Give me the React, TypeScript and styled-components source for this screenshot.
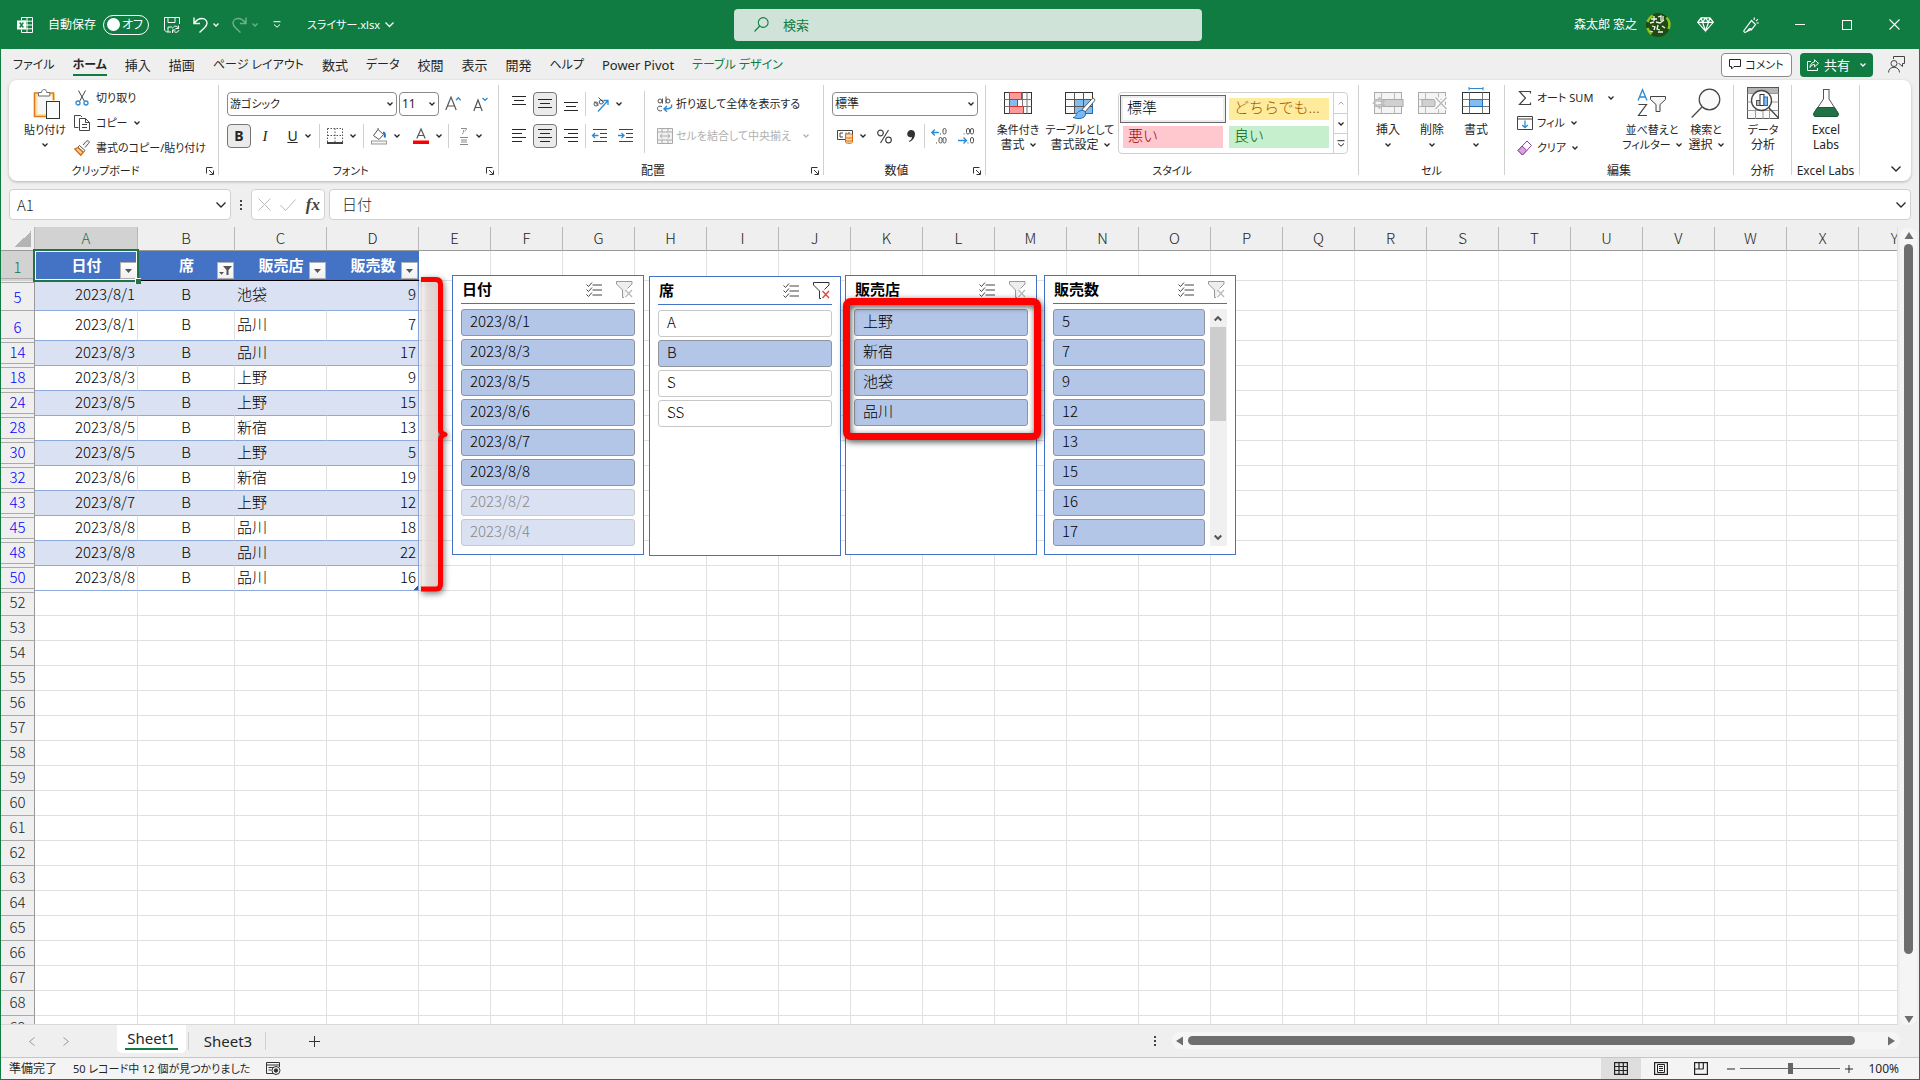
import React from "react";
import styled, { createGlobalStyle, css } from "styled-components";

const GREEN = "#107c41";
const INK = "#262626";
const LINE = "#d0d0d0";
const BLUE = "#4472c4";
const UI = `"Noto Sans", "Noto Sans CJK JP", sans-serif`;
const CELL = `"Noto Sans CJK JP", sans-serif`;

/* Labels that hold kana are set one step smaller than those in kanji or Latin. */
const hasKana = (text: string) => /[\u3041-\u30fc]/.test(text);

const Global = createGlobalStyle`
  *, *::before, *::after { box-sizing: border-box; }
  body { margin: 0; background: #efefef; }
  button, input, select { font: inherit; color: inherit; margin: 0; padding: 0; border: 0; background: none; outline: none; }
  button { display: inline-flex; align-items: center; justify-content: center; white-space: nowrap; }
  svg { display: block; flex: none; overflow: visible; }
`;

const Window = styled.div`
  height: 100vh;
  display: flex;
  flex-direction: column;
  border: 1px solid ${GREEN};
  border-top: 0;
  background: #efefef;
  color: ${INK};
  font: 12px/16px ${UI};
  font-feature-settings: "palt";
`;

/* ---------- icons ---------- */
type IconProps = { w?: number; h?: number; stroke?: string; sw?: number; children?: React.ReactNode };
const Icon = ({ w = 16, h = 16, stroke = "currentColor", sw = 1, children }: IconProps) => (
  <svg width={w} height={h} viewBox={`0 0 ${w} ${h}`} fill="none" stroke={stroke} strokeWidth={sw} aria-hidden="true">
    {children}
  </svg>
);
const Chevron = ({ size = 6, color = "currentColor", sw = 1.3 }: { size?: number; color?: string; sw?: number }) => (
  <svg width={size} height={size / 2 + 1} viewBox={`0 0 ${size} ${size / 2 + 1}`} fill="none" stroke={color} strokeWidth={sw} aria-hidden="true">
    <path d={`M.5 .5 L${size / 2} ${size / 2} L${size - 0.5} .5`} />
  </svg>
);

const ExcelLogo = () => (
  <Icon>
    <path d="M4.500 3.500v-3h11v15h-11v-3M10 .5v15M4.500 4.200h11M8 8h7.500M8 11.800h7.500" />
    <rect x="0" y="3.500" width="9" height="9" fill="currentColor" stroke="none" />
    <path d="M2.700 5.500l3.600 5M6.300 5.500l-3.600 5" stroke={GREEN} strokeWidth="1.4" />
  </Icon>
);
const SaveIcon = () => (
  <Icon>
    <path d="M7 15H2.500L.5 13V.5h15V7M4 .5v5h7v-5M4 15v-5h4M14.500 8.500v3h-3M8.500 11.500c1-3 4.500-3 6-.3M8.500 16v-3h3M15 13c-1 3-4.500 3-6 .3" />
  </Icon>
);
const UndoIcon = ({ flip = false }: { flip?: boolean }) => (
  <Icon w={15} h={16} sw={1.4}>
    <g transform={flip ? "translate(15 0) scale(-1 1)" : undefined}>
      <path d="M1 .5v6h6M1.300 6.200C3.500 3 6 1.500 9 1.500c3 0 5 2.200 5 4.800 0 2-1 3-2.500 4.500L6.500 15.500" />
    </g>
  </Icon>
);
const CustomizeIcon = () => (
  <Icon w={8} h={7}>
    <path d="M.5 .7h7M1 3.500l3 2.700 3-2.700" />
  </Icon>
);
const SearchIcon = () => (
  <Icon w={15} h={15} sw={1.1}>
    <circle cx="9.200" cy="5.500" r="4.900" />
    <path d="M5.700 9L.5 14.500" />
  </Icon>
);
const AvatarIcon = () => (
  <Icon w={24} h={24}>
    <circle cx="12" cy="12" r="12" fill="#1f4a14" stroke="none" />
    <path d="M1.500 9a11 11 0 0 1 5.500-6.500M1.500 15a11 11 0 0 0 4 6M20.500 4.500a11 11 0 0 1 2 11.500" stroke="#8fc31f" strokeWidth="2.500" />
    <path d="M5 6h6M8 3v5M4 10l4-1M12 4l3-1v5M10 9l4 1 4-3M17 3v5M6 13l3 1-1 3M12 12l-1 4 3 1M12 19h5M16 13l3 2M4 18l3 1" stroke="#f2f7e8" strokeWidth="1.300" />
  </Icon>
);
const GemIcon = () => (
  <Icon w={17} h={15} sw={1.2}>
    <path d="M4 .8h9l3.300 4.500L8.500 14.200.7 5.300zM.7 5.300h15.600M4 .8l1.500 4.500 3 8.700 3-8.700L13 .8M8.500.8l-3 4.500M8.500.8l3 4.500" />
  </Icon>
);
const PenIcon = () => (
  <Icon w={16} h={16} sw={1.2}>
    <path d="M8.500 3.500l4 4L9 12 2.500 15.200c-1 .3-2-.5-1.500-1.700zM4 14.500L6 12c1-1 3 0 2.500 1.500M11 2.800L11.500.5M13 4.200l2-2M13.500 6h2.300" />
  </Icon>
);
const CloseIcon = () => (
  <Icon w={11} h={11} sw={1.1}>
    <path d="M.5.5l10 10M10.500.5l-10 10" />
  </Icon>
);
const PasteIcon = () => (
  <Icon w={28} h={32}>
    <g transform="translate(2 1)">
      <path d="M2 6h20v10H14v13H2z" fill="#fbe0a2" stroke="none" />
      <rect x="4.500" y="7" width="15" height="19" fill="#f7f7f7" stroke="none" />
      <path d="M5.500 5H1.500v23.500H13M16.500 5h4v7" stroke="#e07a1a" strokeWidth="1.600" />
      <path d="M5.500 8V4.500h3c.3-4 5-4 5.300 0h3V8z" fill="#fff" stroke="#6b6b6b" />
      <rect x="13.500" y="13.500" width="13" height="17" fill="#fafafa" stroke="#333" />
    </g>
  </Icon>
);
const CutIcon = () => (
  <Icon>
    <path d="M4.500.5l6 11M11.500.5l-6 11" stroke="#444" />
    <circle cx="4" cy="13" r="2" stroke="#2a8ad4" strokeWidth="1.300" />
    <circle cx="12" cy="13" r="2" stroke="#2a8ad4" strokeWidth="1.300" />
  </Icon>
);
const CopyIcon = () => (
  <Icon w={17} h={16} stroke="#444">
    <path d="M4.500 12.500H.5V.5h6L8 2M5.500 3.500h6l4 4v8h-10zM11.500 3.500v4h4M8 9.500h5M8 12.500h5" />
  </Icon>
);
const BrushIcon = () => (
  <Icon>
    <path d="M9 5l3-3.500c1-1 2.500-1 3 0s0 1.500-.500 2L11 7.500" stroke="#555" fill="#eee" />
    <path d="M5.500 5.500l5.500 5-1.500 1.700-5.500-5z" stroke="#555" fill="#fff" />
    <path d="M4 7.500L.8 9l6 6.200 2.500-3z" stroke="#d8690e" fill="#f8cf86" strokeWidth="1.300" />
  </Icon>
);
const GrowFontIcon = ({ down = false }: { down?: boolean }) => (
  <Icon w={16} h={16}>
    <path d={down ? "M.8 15L5 4l4.200 11M2.500 11.500h5" : "M.8 14L6 1l5.200 13M2.800 10h6.400"} stroke="#555" strokeWidth="1.200" />
    <path d={down ? "M9.500 2l2.500 2.300L14.500 2" : "M11 4.200l2.300-2.500 2.300 2.500"} stroke="#2a8ad4" strokeWidth="1.300" />
  </Icon>
);
const BordersIcon = () => (
  <Icon stroke="#555">
    <path d="M.5.500h15v14M.5.5v14M8 .5v14M.5 7.500h15" strokeDasharray="1.500 1.500" />
    <path d="M0 15h16" stroke="#111" strokeWidth="1.600" />
  </Icon>
);
const FillIcon = () => (
  <Icon>
    <path d="M7 1.500L2.500 7.500 8 11.500l4.500-5zM7 1.500V0" stroke="#555" />
    <path d="M12 4.500c2 0 2 2 1.800 5" stroke="#2a6fb8" strokeWidth="2" />
    <rect x=".5" y="13" width="15" height="3" fill="#f4f4f4" stroke="#999" />
  </Icon>
);
const FontColorIcon = () => (
  <Icon>
    <path d="M3.800 10.500L8 1l4.200 9.500M5.500 7.500h5" stroke="#555" strokeWidth="1.200" />
    <rect x="0" y="12.500" width="16" height="3.500" fill="#f00" stroke="none" />
  </Icon>
);
const RubyIcon = () => (
  <Icon w={10} h={18} stroke="#888">
    <path d="M2 1.500h5.500c0 1.200-.7 2-1.700 2.600M4.700 3c0 2-.4 3-1.700 4M1 10.500h8M2 13h6M2 15h6M1 17.500h8" />
  </Icon>
);
const AlignIcon = ({ rows }: { rows: [number, number, number][] }) => (
  <Icon stroke={INK}>
    {rows.map(([x, y, w]) => (
      <path key={y} d={`M${x} ${y + 0.5}h${w}`} />
    ))}
  </Icon>
);
const OrientIcon = () => (
  <Icon>
    <g stroke="#555">
      <circle cx="3" cy="8" r="2" />
      <path d="M5 9.500L1.500 5.500M5.500 1.500l5 5" />
      <circle cx="8.200" cy="6" r="2" />
    </g>
    <path d="M5 15.500L15 4.500M10.500 4.500H15V9" stroke="#2a8ad4" strokeWidth="1.300" />
  </Icon>
);
const WrapIcon = () => (
  <Icon>
    <g stroke="#555">
      <circle cx="3" cy="5" r="2" />
      <path d="M5.500 2.500v5M9 .5v7M5 10.500c-3-1-4.500 0-4.500 2s2 3 4.500 2" />
      <circle cx="11" cy="5" r="2" />
    </g>
    <path d="M14.500 8.500c1 3-1 4.500-7 4.500M10 10l-3 3 3 2.700" stroke="#2a8ad4" strokeWidth="1.400" />
  </Icon>
);
const MergeIcon = () => (
  <Icon stroke="#aaa">
    <path d="M.5.5h15v15H.5z" fill="#f2f2f2" />
    <path d="M.5 4h15M.5 12h15M5 .5V4M11 .5V4M5 12v3.500M11 12v3.500M3 8h10M5.500 5.800L3 8l2.500 2.200M10.500 5.800L13 8l-2.500 2.200" />
  </Icon>
);
const IndentIcon = ({ right = false }: { right?: boolean }) => (
  <Icon stroke="#444">
    <path d="M1 1.500h14M8 5.500h7M8 9.500h7M1 13.500h14" />
    <path d={right ? "M0 7.500h6M3.500 5L6 7.500 3.500 10" : "M.5 7.500h6M3 5L.5 7.500 3 10"} stroke="#2a8ad4" strokeWidth="1.300" />
  </Icon>
);
const MoneyIcon = () => (
  <Icon>
    <path d="M.5 2.500h15v9H.5z" stroke="#444" />
    <path d="M6 5H3v4h3M9 4.500v5M13 5h-2v3" stroke="#444" />
    <path d="M8.500 7v7c0 1.800 7 1.800 7 0V7c0-1.600-7-1.600-7 0z" fill="#fbd9b0" stroke="#d8690e" />
    <path d="M8.500 9c0 1.500 7 1.500 7 0M8.500 12c0 1.500 7 1.500 7 0" stroke="#d8690e" />
  </Icon>
);
const PercentIcon = () => (
  <Icon w={15} h={15} stroke="#444" sw={1.2}>
    <circle cx="3.500" cy="4" r="2.800" />
    <circle cx="11.500" cy="11" r="2.800" />
    <path d="M11.500 1L3.500 14" />
  </Icon>
);
const CommaIcon = () => (
  <Icon w={8} h={12}>
    <path d="M4 0c2.500 0 4 1.500 4 4 0 3.500-2 6.500-5.500 8l-.500-1C4 10 5 8.500 5 7 2 8 .2 6.300.2 4 .2 1.700 2 0 4 0z" fill="#333" stroke="none" />
  </Icon>
);
const DecimalIcon = ({ less = false }: { less?: boolean }) => {
  const zero = (x: number, y: number) => <rect key={`${x}-${y}`} x={x} y={y} width="3" height="5.500" rx="1.500" />;
  return (
    <Icon stroke="#555">
      {less ? [zero(8.5, 0.5), zero(12.5, 0.5), zero(12.5, 9.5)] : [zero(12, 0.5), zero(8, 9.5), zero(12, 9.5)]}
      {less ? <path d="M6 5.500v1M10 14.500v1" /> : <path d="M9.500 5.500v1M5.500 14.500v1" />}
      <path d={less ? "M0 12.500h8.500M5.500 9.500l3 3-3 3" : "M.8 4.500h7M3.800 1.500l-3 3 3 3"} stroke="#2a8ad4" strokeWidth="1.300" />
    </Icon>
  );
};
const CondIcon = () => (
  <Icon w={28} h={22}>
    <rect x=".5" y=".5" width="27" height="21" fill="#fafafa" stroke="#333" />
    <path d="M.5 7.500h27M.5 14.500h27M5.500.5v21M18.500.5v21M23 .5v21" stroke="#777" />
    <rect x="5.500" y=".5" width="12" height="7" fill="#ff9a9a" stroke="#d5332f" />
    <rect x="5.500" y="7.500" width="8" height="7" fill="#83bdf0" stroke="#1e6fb8" />
    <rect x="5.500" y="14.500" width="14" height="7" fill="#ff9a9a" stroke="#d5332f" />
  </Icon>
);
const TableFormatIcon = () => (
  <Icon w={30} h={28}>
    <g transform="translate(0 3)">
      <rect x=".5" y=".5" width="27" height="21" fill="#fafafa" stroke="#333" />
      <rect x="9.500" y="7.500" width="18" height="14" fill="#83bdf0" stroke="#1e6fb8" />
      <path d="M.5 7.500h27M.5 14.500h27M9.500.5v21M18.500.5v21" stroke="#555" />
      <path d="M29 6.500c1 1 1 2 0 3L20 20l-3-2.500L26.500 7.500c1-1 2-1.500 2.500-1z" fill="#fff" stroke="#555" />
      <path d="M18 18.500c3 .5 3.500 4 1 6.500-2.500 2-7 2-11 .5 3.500-.5 2.500-2.500 4.500-5 1.500-1.700 3.500-2.200 5.500-2z" fill="#7db8ee" stroke="#1e6fb8" />
    </g>
  </Icon>
);
const CellIcon = ({ kind }: { kind: "insert" | "delete" | "format" }) => {
  const live = kind === "format";
  const line = live ? "#333" : "#aaa";
  return (
    <Icon w={30} h={32}>
      <rect x="1.500" y="5.500" width="27" height="21" fill={live ? "#fff" : "#f4f4f4"} stroke={line} />
      <path d="M1.500 12.500h27M1.500 19.500h27M8.500 5.500v21M21.500 5.500v21" stroke={live ? "#777" : "#bbb"} />
      {kind === "format" && (
        <>
          <rect x="8.500" y="12.500" width="13" height="7" fill="#83bdf0" stroke="#1e6fb8" />
          <path d="M8 1.500h14M8 0v3.500M22 0v3.500" stroke="#2a8ad4" />
        </>
      )}
      {kind === "insert" && (
        <>
          <rect x="10" y="12.500" width="20" height="7" fill="#d0d0d0" stroke="#aaa" />
          <path d="M12 14.300H5M12 17.700H5M7.500 10.500L.5 16l7 5.500" stroke="#bbb" strokeWidth="1.600" />
        </>
      )}
      {kind === "delete" && (
        <>
          <rect x="5" y="12.500" width="13" height="7" fill="#d0d0d0" stroke="#aaa" />
          <path d="M18.500 10.500l11 11.500M29.500 10.500l-11 11.500" stroke="#fff" strokeWidth="4" />
          <path d="M18.500 10.500l11 11.500M29.500 10.500l-11 11.500" stroke="#bbb" strokeWidth="1.600" />
        </>
      )}
    </Icon>
  );
};
const SumIcon = () => (
  <Icon stroke="#444" sw={1.2}>
    <path d="M13.500 3.500V1.500h-11L8.500 8l-6 6.500h11v-2" />
  </Icon>
);
const FillDownIcon = () => (
  <Icon>
    <path d="M.5 1.500h15v13H.5zM.5 4h15" stroke="#444" />
    <path d="M8 5.500v7M5.200 10L8 12.700 10.800 10" stroke="#2a8ad4" strokeWidth="1.300" />
  </Icon>
);
const EraserIcon = () => (
  <Icon>
    <path d="M10 1l4.500 4.500-9 9.500L1 10.500z" fill="#fff" stroke="#8c3f99" />
    <path d="M5.200 6L9.700 10.500 5.500 15 1 10.500z" fill="#dba2e3" stroke="#8c3f99" />
  </Icon>
);
const SortIcon = () => (
  <Icon w={30} h={28}>
    <path d="M1 11.500L5.500.8 10 11.500M2.800 8h5.400" stroke="#2a8ad4" strokeWidth="1.300" />
    <path d="M1.500 15.500h8L1.500 26.500h8.500" stroke="#444" strokeWidth="1.200" />
    <path d="M13.500 7.500h15v3l-5.500 5v7h-4v-7l-5.500-5z" fill="#f6f6f6" stroke="#444" />
  </Icon>
);
const FindIcon = () => (
  <Icon w={30} h={30} stroke="#444" sw={1.2}>
    <circle cx="18.500" cy="11.500" r="10.300" fill="#fafafa" />
    <path d="M11 19L.7 29.500" />
  </Icon>
);
const AnalyzeIcon = () => (
  <Icon w={32} h={32}>
    <rect x=".5" y=".5" width="31" height="31" fill="#fafafa" stroke="#555" />
    <rect x="1" y="1" width="30" height="5" fill="#b5b5b5" stroke="none" />
    <path d="M.5 6.500h31M.5 15h31M.5 23.500h31M8.500 6v26M22.500 6v26M16 22v10" stroke="#999" />
    <circle cx="14.500" cy="13.500" r="10" fill="#fff" stroke="#444" strokeWidth="1.300" />
    <path d="M22 21l9.500 10" stroke="#444" strokeWidth="1.300" />
    <rect x="9.500" y="13.500" width="4" height="5" fill="#bbb" stroke="#555" />
    <rect x="13" y="7.500" width="4" height="11" fill="#fff" stroke="#333" />
    <rect x="17" y="10" width="3.500" height="8.500" fill="#83bdf0" stroke="#1e6fb8" />
  </Icon>
);
const FlaskIcon = () => (
  <Icon w={26} h={30}>
    <path d="M10 1.500h6.500M10.500 1.500V11L1 25c-1 2 0 3.500 2 3.500h20c2 0 3-1.500 2-3.500L16 11V1.500" fill="#fff" stroke="#555" />
    <path d="M4.500 19.500h17L25 25c1 2 0 3.500-2 3.500H3C1 28.500 0 27 1 25z" fill="#217346" stroke="#1a5c38" />
  </Icon>
);
const LauncherIcon = () => (
  <Icon w={8} h={8} stroke="#333">
    <path d="M.5 6.500v-6h6M3 3l4 4M7.500 3.500v4h-4" />
  </Icon>
);
const CommentIcon = () => (
  <Icon w={12} h={11}>
    <path d="M.5.5h11v7H5L2.500 10V7.500h-2z" />
  </Icon>
);
const ShareIcon = () => (
  <Icon w={12} h={12}>
    <path d="M4 2.500H.5v9h10V9M7.500 3V.8l4 3.500-4 3.500V5.500C5.500 5.500 4 6.500 3 8.500 3 5.500 5 3.300 7.500 3z" />
  </Icon>
);
const FeedbackIcon = () => (
  <Icon w={17} h={17} stroke="#444">
    <circle cx="6" cy="7.500" r="3" />
    <path d="M.5 16.500c0-7 11-7 11 0M5.500 3V.5h11v7h-2v3L11 7.500h-.5" />
  </Icon>
);
const CancelIcon = () => (
  <Icon w={13} h={13} stroke="#bbb">
    <path d="M.5.5l12 12M12.500.5l-12 12" />
  </Icon>
);
const CheckIcon = () => (
  <Icon w={16} h={12} stroke="#bbb">
    <path d="M.5 6l5 5.500L15.500.5" />
  </Icon>
);
const MultiIcon = () => (
  <Icon w={16} h={15} stroke="#444">
    <path d="M6.500 3h9.500M6.500 8h9.500M6.500 13h9.500M.5 2.500L2.500 4.500 6 .5M.5 7.500l2 2L6 5.500M.5 12.500l2 2L6 10.500" />
  </Icon>
);
const ClearIcon = ({ active }: { active: boolean }) => (
  <Icon w={17} h={17} stroke={active ? "#333" : "#999"}>
    <path d="M8 16.500H6.500V9L.5 3V.5h15.500V3L11.500 7.500" fill={active ? "#fff" : "#eee"} />
    <path d="M9.500 9l6.500 7M16 9l-6.500 7" stroke={active ? "#e8413c" : "#bbb"} strokeWidth="1.300" />
  </Icon>
);
const MacroIcon = () => (
  <Icon w={15} h={13} stroke="#333">
    <path d="M7 11.500H.5v-11h13V5M.5 3h13M2.500 5.500h5M2.500 8h3" />
    <circle cx="10" cy="8.500" r="4" />
    <circle cx="10" cy="8.500" r="1.700" fill="#333" />
  </Icon>
);
const ViewIcon = ({ kind }: { kind: "grid" | "page" | "break" }) => (
  <Icon w={14} h={13} stroke="#222" sw={1.2}>
    <rect x=".6" y=".6" width="12.800" height="11.800" />
    {kind === "grid" && <path d="M.5 4.500h13M.5 8.500h13M5 .5v12M9.300.5v12" />}
    {kind === "page" && <path d="M3.500 2.500h7v8h-7zM5 4.500h4M5 6.500h4M5 8.500h4" strokeWidth="1" />}
    {kind === "break" && <path d="M5 .5v6.500M9.300 .5v6.500M.5 7h9" />}
  </Icon>
);
const Triangle = ({ dir }: { dir: "up" | "down" | "left" | "right" }) => {
  const d = { up: "M4 0l4.500 7h-9z", down: "M-.5 0h9L4 7z", left: "M7 -.5v9L0 4z", right: "M0 -.5l7 4.500-7 4.500z" }[dir];
  return (
    <Icon w={8} h={8}>
      <path d={d} fill="#6e6e6e" stroke="none" />
    </Icon>
  );
};

/* ---------- title bar ---------- */
const TitleBar = styled.header`
  flex: none;
  height: 49px;
  margin: 0 -1px;
  display: grid;
  grid-template-columns: 734fr 468fr 718fr;
  align-items: center;
  background: ${GREEN};
  color: #fff;
`;
const TitleLeft = styled.div`
  display: flex;
  align-items: center;
  padding-left: 17px;
  gap: 15px;
`;
const TitleRight = styled.div`
  display: flex;
  align-items: center;
  justify-content: flex-end;
  padding-right: 20px;
`;
const Account = styled.button`
  gap: 9px;
  margin-right: 27px;
`;
const TitleTools = styled.div`
  display: flex;
  align-items: center;
  gap: 29px;
  margin-right: 36px;
`;
const WindowTools = styled.div`
  display: flex;
  align-items: center;
  gap: 37px;
`;
const MinBar = styled.span`
  width: 10px;
  height: 1px;
  background: #fff;
`;
const MaxBox = styled.span`
  width: 10px;
  height: 10px;
  border: 1px solid #fff;
`;
const AutoSave = styled.label`
  display: flex;
  align-items: center;
  gap: 7px;
`;
const Toggle = styled.button`
  width: 46px;
  height: 20px;
  justify-content: space-between;
  padding: 0 5px 0 3px;
  border: 1px solid #fff;
  border-radius: 10px;
  &::before {
    content: "";
    width: 13px;
    height: 13px;
    border-radius: 50%;
    background: #fff;
  }
`;
const Split = styled.button<{ $dim?: boolean }>`
  gap: 5px;
  margin-left: -2px;
  opacity: ${(p) => (p.$dim ? 0.4 : 1)};
`;
const FileName = styled.button`
  gap: 5px;
  margin-left: 11px;
  font-size: 11px;
`;
const SearchBox = styled.label`
  display: flex;
  align-items: center;
  gap: 14px;
  height: 32px;
  padding-left: 20px;
  border-radius: 4px;
  background: #cfe3d8;
  color: ${GREEN};
  font-size: 13px;
  input {
    flex: 1;
    &::placeholder { color: ${GREEN}; opacity: 1; }
  }
`;

/* ---------- tabs ---------- */
const TabBar = styled.nav`
  flex: none;
  height: 31px;
  display: flex;
  align-items: center;
  padding: 0 14px 0 12px;
  gap: 18px;
`;
const Tab = styled.button<{ $active?: boolean; $accent?: boolean; $kana: boolean }>`
  height: 22px;
  padding-top: 2px;
  border-bottom: 2px solid ${(p) => (p.$active ? GREEN : "transparent")};
  font-size: ${(p) => (p.$kana ? 12 : 13)}px;
  font-weight: ${(p) => (p.$active ? 700 : 400)};
  color: ${(p) => (p.$accent ? GREEN : INK)};
`;
const TabActions = styled.div`
  margin-left: auto;
  display: flex;
  align-items: center;
  gap: 8px;
`;
const CommentButton = styled.button`
  height: 24px;
  width: 71px;
  gap: 4px;
  border: 1px solid #8a8a8a;
  border-radius: 4px;
  background: #fff;
  font-size: 11px;
`;
const ShareButton = styled.button`
  height: 24px;
  width: 73px;
  gap: 5px;
  margin-right: 7px;
  border-radius: 4px;
  background: ${GREEN};
  color: #fff;
  font-size: 13px;
  svg:last-child { margin-left: 5px; }
`;

/* ---------- ribbon ---------- */
const Ribbon = styled.section`
  flex: none;
  height: 101px;
  margin: 0 8px;
  padding: 5px 0;
  display: flex;
  background: #fff;
  border-radius: 8px;
  box-shadow: 0 1px 3px rgba(0, 0, 0, 0.25);
`;
const GroupBox = styled.div<{ $w: number }>`
  width: ${(p) => p.$w}px;
  height: 90px;
  display: flex;
  flex-direction: column;
  border-right: 1px solid ${LINE};
`;
const GroupBody = styled.div<{ $pad: number }>`
  flex: 1;
  display: flex;
  padding-left: ${(p) => p.$pad}px;
`;
const GroupFoot = styled.div`
  height: 9px;
  display: flex;
  align-items: center;
  line-height: 9px;
  white-space: nowrap;
`;
const GroupName = styled.span<{ $kana: boolean }>`
  flex: 1;
  display: flex;
  justify-content: center;
  font-size: ${(p) => (p.$kana ? 11 : 12)}px;
`;
const Launcher = styled.button`
  width: 16px;
`;
const Group = ({ w, name, pad, launcher, children }: { w: number; name: string; pad: number; launcher?: boolean; children: React.ReactNode }) => (
  <GroupBox $w={w} role="group" aria-label={name}>
    <GroupBody $pad={pad}>{children}</GroupBody>
    <GroupFoot>
      <GroupName $kana={hasKana(name)}>{name}</GroupName>
      {launcher && (
        <Launcher aria-label={`${name}の設定`}>
          <LauncherIcon />
        </Launcher>
      )}
    </GroupFoot>
  </GroupBox>
);
const BigButton = styled.button<{ $w: number }>`
  width: ${(p) => p.$w}px;
  flex-direction: column;
  justify-content: flex-start;
  align-self: flex-start;
  padding-top: 2px;
  line-height: 15px;
`;
const BigIcon = styled.span`
  height: 32px;
  margin-bottom: 3px;
  display: flex;
  align-items: center;
  justify-content: center;
`;
const BigLine = styled.span<{ $kana: boolean }>`
  height: 15px;
  display: flex;
  align-items: center;
  gap: 5px;
  font-size: ${(p) => (p.$kana ? 11 : 12)}px;
`;
const Big = ({ w, icon, lines, arrow }: { w: number; icon: React.ReactNode; lines: string[]; arrow?: boolean }) => (
  <BigButton $w={w}>
    <BigIcon>{icon}</BigIcon>
    {lines.map((t, i) => (
      <BigLine key={i} $kana={hasKana(t)}>
        {t}
        {arrow && i === lines.length - 1 && <Chevron />}
      </BigLine>
    ))}
  </BigButton>
);
const Stack = styled.div`
  display: flex;
  flex-direction: column;
  align-items: flex-start;
`;
const Small = styled.button<{ $w?: number }>`
  height: 25px;
  gap: 4px;
  width: ${(p) => (p.$w ? `${p.$w}px` : "auto")};
  justify-content: flex-start;
  font-size: 11px;
  > svg:last-child:not(:first-child) { margin-left: 2px; }
`;
const IconPad = styled.span`
  width: 20px;
  display: flex;
  justify-content: center;
`;
const Gap = styled.span<{ $w: number }>`
  width: ${(p) => p.$w}px;
`;
const Spread = styled.span`
  margin-right: auto;
`;
const TwoRows = styled.div`
  padding-top: 7px;
  display: flex;
  flex-direction: column;
  gap: 8px;
`;
const ToolRow = styled.div<{ $gap?: number }>`
  height: 24px;
  display: flex;
  align-items: center;
  gap: ${(p) => p.$gap || 0}px;
`;
const Tool = styled.button<{ $w?: number; $on?: boolean }>`
  width: ${(p) => p.$w || 24}px;
  height: 24px;
  gap: 7px;
  font-size: 14px;
  ${(p) =>
    p.$on &&
    css`
      border: 1px solid #767676;
      border-radius: 4px;
      background: #ebebeb;
    `}
`;
const Italic = styled.i`
  font-family: "Liberation Serif", serif;
  font-size: 15px;
`;
const Rule = styled.i<{ $h?: number; $m?: number }>`
  flex: none;
  width: 1px;
  height: ${(p) => p.$h || 24}px;
  margin: 0 ${(p) => p.$m || 0}px;
  background: ${LINE};
`;
const RuleSlot = styled.div`
  padding: 6px 12px 0 0;
  margin-left: auto;
`;
const RuleBar = styled.div`
  display: flex;
  align-items: center;
`;
const SelectBox = styled.label<{ $w: number; $kana: boolean }>`
  width: ${(p) => p.$w}px;
  height: 24px;
  display: grid;
  align-items: center;
  border: 1px solid #8a8a8a;
  border-radius: 4px;
  background: #fff;
  font-size: ${(p) => (p.$kana ? 11 : 12)}px;
  select {
    grid-area: 1 / 1;
    appearance: none;
    width: 100%;
    height: 22px;
    padding-left: 2px;
  }
  svg {
    grid-area: 1 / 1;
    justify-self: end;
    margin-right: 3px;
    pointer-events: none;
  }
`;
const Select = ({ w, label, value }: { w: number; label: string; value: string }) => (
  <SelectBox $w={w} $kana={hasKana(value)}>
    <select aria-label={label} defaultValue={value}>
      <option>{value}</option>
    </select>
    <Chevron />
  </SelectBox>
);
const WideTool = styled.button<{ $dim?: boolean }>`
  width: 152px;
  height: 24px;
  gap: 3px;
  justify-content: flex-start;
  font-size: 11px;
  color: ${(p) => (p.$dim ? "#b0b0b0" : INK)};
`;
const Gallery = styled.div`
  width: 230px;
  height: 62px;
  margin-top: 7px;
  display: flex;
  border: 1px solid ${LINE};
  border-radius: 4px;
`;
const GalleryGrid = styled.div`
  flex: 1;
  display: grid;
  grid-template-columns: 106px 106px;
  grid-template-rows: 28px 28px;
  padding: 2px 1px;
`;
const Swatch = styled.button<{ $bg: string; $fg: string; $on?: boolean }>`
  justify-content: flex-start;
  align-items: flex-start;
  margin: ${(p) => (p.$on ? "0" : "3px")};
  padding: ${(p) => (p.$on ? "2px 6px" : "0 5px")};
  border: ${(p) => (p.$on ? "1px solid #666" : "0")};
  box-shadow: ${(p) => (p.$on ? "inset 0 0 0 2px #ececec" : "none")};
  background: ${(p) => p.$bg};
  color: ${(p) => p.$fg};
  font: 300 15px/17px ${CELL};
  font-feature-settings: normal;
`;
const GalleryScroll = styled.div`
  width: 15px;
  display: grid;
  grid-template-rows: repeat(3, 1fr);
  border-left: 1px solid ${LINE};
  button + button { border-top: 1px solid ${LINE}; }
`;
const Collapse = styled.button`
  margin: auto 10px 4px auto;
`;

/* ---------- formula bar ---------- */
const FormulaBar = styled.div`
  flex: none;
  height: 46px;
  padding: 8px 8px 7px;
  display: flex;
`;
const Field = styled.label<{ $w?: number }>`
  ${(p) => (p.$w ? `width: ${p.$w}px;` : "flex: 1;")}
  display: flex;
  align-items: center;
  padding: 0 4px 0 7px;
  border: 1px solid ${LINE};
  border-radius: 4px;
  background: #fff;
  font: 300 15px/20px ${CELL};
  font-feature-settings: normal;
  input {
    flex: 1;
    min-width: 0;
    height: 28px;
    padding-bottom: ${(p) => (p.$w ? 0 : 2)}px;
  }
`;
const Dots = styled.span<{ $w: number }>`
  width: ${(p) => p.$w}px;
  display: flex;
  flex-direction: column;
  align-items: center;
  justify-content: center;
  gap: 2px;
  i { width: 2px; height: 2px; background: #444; }
`;
const FxBox = styled.div`
  width: 74px;
  margin-right: 4px;
  display: flex;
  align-items: center;
  justify-content: space-between;
  padding: 0 4px 0 6px;
  border: 1px solid ${LINE};
  border-radius: 4px;
  background: #fff;
`;
const Fx = styled.button`
  font: italic 700 17px/20px "Liberation Serif", serif;
  color: #444;
`;

/* ---------- sheet ---------- */
const Main = styled.main`
  flex: 1;
  min-height: 0;
  display: flex;
`;
const Sheet = styled.div`
  position: relative;
  flex: 1;
  min-width: 0;
  overflow: hidden;
  border-right: 1px solid #e0e0e0;
  border-bottom: 1px solid #d8d8d8;
`;
const Grid = styled.table`
  table-layout: fixed;
  width: 1931px;
  border-collapse: separate;
  border-spacing: 0;
  font: 300 15px/22px ${CELL};
  font-feature-settings: normal;
  color: #000;
`;
const ColHead = styled.th<{ $on?: boolean }>`
  height: 24px;
  padding: 0 0 1px;
  border-right: 1px solid #b8b8b8;
  border-bottom: 1px solid #999;
  background: ${(p) => (p.$on ? "#d2d2d2" : "#efefef")};
  color: ${(p) => (p.$on ? "#217346" : "#222")};
  font-weight: 300;
`;
const Corner = styled.th`
  padding: 0;
  border-right: 1px solid #b8b8b8;
  border-bottom: 1px solid #999;
  background: linear-gradient(135deg, transparent 50%, #b4b4b4 50%) 14px 4px / 16px 16px no-repeat #efefef;
`;
const RowHead = styled.th<{ $before?: boolean; $after?: boolean; $kind: "sel" | "filtered" | "plain" }>`
  padding: 0 0 ${(p) => (p.$after ? 3 : 2)}px;
  vertical-align: bottom;
  border-right: 1px solid #999;
  border-bottom: ${(p) => (p.$after ? "0" : "1px solid #aaa")};
  background-color: ${(p) => (p.$kind === "sel" ? "#d2d2d2" : "#efefef")};
  background-image: linear-gradient(#aaa, #aaa), linear-gradient(#aaa, #aaa);
  background-repeat: no-repeat;
  background-size: 100% ${(p) => (p.$before ? 1 : 0)}px, 100% ${(p) => (p.$after ? 1 : 0)}px;
  background-position: 0 1px, 0 calc(100% - 2px);
  color: ${(p) => ({ sel: "#217346", filtered: "#0000ff", plain: "#222" })[p.$kind]};
  font-weight: 300;
  text-align: center;
`;
const Row = styled.tr<{ $h: number }>`
  height: ${(p) => p.$h}px;
`;
const Blank = styled.td`
  padding: 0;
  border-right: 1px solid #e0e0e0;
  border-bottom: 1px solid #e0e0e0;
  background: #fff;
`;
const Cell = styled.td<{ $band: boolean; $align: "left" | "center" | "right"; $tall: boolean; $last?: boolean }>`
  padding: 0 2px ${(p) => (p.$tall ? 4 : 2)}px;
  text-align: ${(p) => p.$align};
  border-bottom: 1px solid #8ea9db;
  border-right: 1px solid ${(p) => (p.$last ? "#8ea9db" : p.$band ? "#d9e1f2" : "#e0e0e0")};
  background: ${(p) => (p.$band ? "#d9e1f2" : "#fff")};
`;
const HeadCell = styled.td`
  padding: 0;
  border-bottom: 1px solid #000;
  background: ${BLUE};
  color: #fff;
  font-weight: 700;
`;
const HeadInner = styled.div`
  height: 29px;
  display: grid;
  align-items: center;
  justify-items: center;
  span, button { grid-area: 1 / 1; }
  span { padding-bottom: 2px; }
  button {
    align-self: end;
    justify-self: end;
    width: 17px;
    height: 17px;
    margin: 0 1px 1px 0;
    border: 1px solid #b0b0b0;
    background: linear-gradient(#fff, #f0f0f2);
  }
`;

const Selection = styled.div`
  position: absolute;
  left: 32px;
  top: 22px;
  width: 106px;
  height: 33px;
  border: 2px solid #217346;
  box-shadow: inset 0 0 0 1px #fff;
  pointer-events: none;
  &::after {
    content: "";
    position: absolute;
    right: -4px;
    bottom: -4px;
    width: 6px;
    height: 6px;
    border: solid #fff;
    border-width: 1px 0 0 1px;
    background: #217346;
  }
`;
const ResizeMark = styled.i`
  position: absolute;
  left: 413px;
  top: 359px;
  width: 4px;
  height: 4px;
  background: linear-gradient(135deg, transparent 45%, #3a55b4 45%);
`;

/* ---------- slicers ---------- */
const SlicerBox = styled.section<{ $x: number; $y: number }>`
  position: absolute;
  left: ${(p) => p.$x}px;
  top: ${(p) => p.$y}px;
  width: 192px;
  height: 280px;
  padding: 0 8px;
  border: 1px solid ${BLUE};
  background: #fff;
  font: 300 15px/22px ${CELL};
  font-feature-settings: normal;
  color: #000;
`;
const SlicerHead = styled.header`
  height: 28px;
  display: flex;
  align-items: center;
  gap: 14px;
  padding: 0 2px 0 1px;
  border-bottom: 1px solid ${BLUE};
  h2 { flex: 1; margin: 0; padding-bottom: 2px; font-size: 15px; font-weight: 700; }
`;
const SlicerBody = styled.div`
  display: flex;
  gap: 5px;
  padding-top: 5px;
`;
const SlicerItems = styled.div`
  flex: 1;
  display: flex;
  flex-direction: column;
  gap: 3px;
`;
const SlicerItem = styled.button<{ $state: "on" | "off" | "empty" }>`
  height: 27px;
  justify-content: flex-start;
  padding: 0 0 3px 8px;
  border: 1px solid ${(p) => (p.$state === "on" ? "#8f959f" : "#c8c8c8")};
  border-radius: 3px;
  background: ${(p) => ({ on: "#b4c6e7", off: "#fff", empty: "#d9e1f2" })[p.$state]};
  color: ${(p) => (p.$state === "empty" ? "#8a8a8a" : "#000")};
`;
const SlicerScroll = styled.div`
  width: 17px;
  height: 237px;
  display: flex;
  flex-direction: column;
  background: #f0f0f0;
  button { width: 16px; height: 18px; }
`;
const SlicerThumb = styled.div`
  width: 16px;
  height: 94px;
  margin-bottom: auto;
  background: #cdcdcd;
`;
type SlicerData = { title: string; x: number; y: number; items: string[]; off?: string[]; empty?: string[]; filtered?: boolean; scroll?: boolean };
const Slicer = ({ title, x, y, items, off = [], empty = [], filtered = false, scroll }: SlicerData) => (
  <SlicerBox $x={x} $y={y}>
    <SlicerHead>
      <h2>{title}</h2>
      <button aria-label="複数選択">
        <MultiIcon />
      </button>
      <button aria-label="フィルターのクリア">
        <ClearIcon active={filtered} />
      </button>
    </SlicerHead>
    <SlicerBody>
      <SlicerItems>
        {items.map((t) => (
          <SlicerItem key={t} $state={off.includes(t) ? "off" : empty.includes(t) ? "empty" : "on"}>
            {t}
          </SlicerItem>
        ))}
      </SlicerItems>
      {scroll && (
        <SlicerScroll>
          <button aria-label="上へ">
            <Icon w={8} h={5} stroke="#555" sw={2}>
              <path d="M.7 4.500L4 1.200l3.300 3.300" />
            </Icon>
          </button>
          <SlicerThumb />
          <button aria-label="下へ">
            <Icon w={8} h={5} stroke="#555" sw={2}>
              <path d="M.7.5L4 3.800 7.300.5" />
            </Icon>
          </button>
        </SlicerScroll>
      )}
    </SlicerBody>
  </SlicerBox>
);
const RedFrame = styled.div`
  position: absolute;
  left: 842px;
  top: 71px;
  width: 198px;
  height: 142px;
  border: 7px solid #f00;
  border-radius: 8px;
  filter: drop-shadow(1px 2px 3px rgba(0, 0, 0, 0.7));
  pointer-events: none;
`;
const Bracket = styled.svg`
  position: absolute;
  left: 420px;
  top: 49px;
  filter: drop-shadow(1px 2px 3px rgba(0, 0, 0, 0.55));
`;

/* ---------- scrollbars and bottom bars ---------- */
const VScroll = styled.div`
  width: 21px;
  display: flex;
  justify-content: center;
  padding-top: 1px;
`;
const VTrack = styled.div`
  width: 17px;
  display: flex;
  flex-direction: column;
  align-items: center;
  padding: 4px 0 1px;
  border-radius: 8px;
  background: #f5f5f5;
`;
const VThumb = styled.div`
  flex: 711;
  width: 9px;
  margin: 4px 0 0;
  border-radius: 5px;
  background: #6e6e6e;
`;
const Space = styled.div<{ $f: number }>`
  flex: ${(p) => p.$f};
`;
const SheetBar = styled.div`
  flex: none;
  height: 33px;
  display: flex;
  border-bottom: 1px solid #c6c6c6;
`;
const SheetNav = styled.div`
  width: 116px;
  padding: 0 48px 0 28px;
  display: flex;
  align-items: center;
  justify-content: space-between;
  color: #999;
`;
const SheetTab = styled.button<{ $on?: boolean }>`
  height: ${(p) => (p.$on ? 28 : 32)}px;
  width: ${(p) => (p.$on ? 69 : 74)}px;
  border-radius: 0 0 5px 5px;
  background: ${(p) => (p.$on ? "#fff" : "transparent")};
  font-size: 15px;
  line-height: 19px;
  span {
    padding: 0 2px;
    border-bottom: ${(p) => (p.$on ? `2px solid ${GREEN}` : "0")};
  }
`;
const AddSheet = styled.button`
  width: 96px;
`;
const HScroll = styled.div`
  flex: 0 1 728px;
  height: 17px;
  margin: 7px 19px 0 9px;
  display: flex;
  align-items: center;
  gap: 4px;
  padding: 0 4px;
  border-radius: 8px;
  background: #f5f5f5;
`;
const HThumb = styled.div`
  flex: 667;
  height: 9px;
  border-radius: 5px;
  background: #6e6e6e;
`;
const StatusBar = styled.footer`
  flex: none;
  height: 21px;
  display: flex;
  align-items: center;
  gap: 16px;
  padding: 0 20px 0 8px;
  background: #f4f4f4;
`;
const StatusText = styled.span<{ $kana?: boolean }>`
  font-size: ${(p) => (p.$kana ? 11 : 12)}px;
`;
const Views = styled.div`
  margin-left: auto;
  height: 21px;
  display: flex;
`;
const ViewButton = styled.button<{ $on?: boolean }>`
  width: 40px;
  background: ${(p) => (p.$on ? "#dedede" : "transparent")};
`;
const Zoom = styled.div`
  display: flex;
  align-items: center;
  gap: 5px;
  margin: 0 -1px 0 -10px;
  input {
    appearance: none;
    width: 100px;
    height: 12px;
    background: linear-gradient(#666, #666) center / 100% 1px no-repeat;
  }
  input::-webkit-slider-thumb {
    appearance: none;
    width: 5px;
    height: 11px;
    background: #666;
  }
`;

/* ---------- data ---------- */
const COLS = "ABCDEFGHIJKLMNOPQRSTUVWXY".split("");
const COL_W: Record<string, number> = { A: 103, B: 97, C: 92, D: 92 };
const RECORDS: [number, string, string, string, number][] = [
  [5, "2023/8/1", "B", "池袋", 9],
  [6, "2023/8/1", "B", "品川", 7],
  [14, "2023/8/3", "B", "品川", 17],
  [18, "2023/8/3", "B", "上野", 9],
  [24, "2023/8/5", "B", "上野", 15],
  [28, "2023/8/5", "B", "新宿", 13],
  [30, "2023/8/5", "B", "上野", 5],
  [32, "2023/8/6", "B", "新宿", 19],
  [43, "2023/8/7", "B", "上野", 12],
  [45, "2023/8/8", "B", "品川", 18],
  [48, "2023/8/8", "B", "品川", 22],
  [50, "2023/8/8", "B", "品川", 16],
];
const PLAIN_ROWS = Array.from({ length: 18 }, (_, i) => 52 + i);
const TABS = ["ファイル", "ホーム", "挿入", "描画", "ページ レイアウト", "数式", "データ", "校閲", "表示", "開発", "ヘルプ", "Power Pivot", "テーブル デザイン"];
const SLICERS: SlicerData[] = [
  { title: "日付", x: 451, y: 48, items: ["2023/8/1", "2023/8/3", "2023/8/5", "2023/8/6", "2023/8/7", "2023/8/8", "2023/8/2", "2023/8/4"], empty: ["2023/8/2", "2023/8/4"] },
  { title: "席", x: 648, y: 49, items: ["A", "B", "S", "SS"], off: ["A", "S", "SS"], filtered: true },
  { title: "販売店", x: 844, y: 48, items: ["上野", "新宿", "池袋", "品川"] },
  { title: "販売数", x: 1043, y: 48, items: ["5", "7", "9", "12", "13", "15", "16", "17"], scroll: true },
];

const Blanks = ({ from }: { from: number }) => (
  <>
    {COLS.slice(from).map((c) => (
      <Blank key={c} />
    ))}
  </>
);

const SheetGrid = () => (
  <Grid>
    <colgroup>
      <col width={34} />
      {COLS.map((c) => (
        <col key={c} width={COL_W[c] || 72} />
      ))}
      <col />
    </colgroup>
    <thead>
      <tr>
        <Corner aria-label="すべて選択" />
        {COLS.map((c) => (
          <ColHead key={c} $on={c === "A"}>
            {c}
          </ColHead>
        ))}
      </tr>
    </thead>
    <tbody>
      <Row $h={30}>
        <RowHead $kind="sel" $after>
          1
        </RowHead>
        {["日付", "席", "販売店", "販売数"].map((t) => (
          <HeadCell key={t}>
            <HeadInner>
              <span>{t}</span>
              <button aria-label={`${t}のフィルター`}>
                {t === "席" ? (
                  <Icon w={13} h={11}>
                    <path d="M4 1h9L9.500 5v5h-2V5zM0 7h5L2.500 9.800z" fill="#555" stroke="none" />
                  </Icon>
                ) : (
                  <Icon w={7} h={4}>
                    <path d="M0 0h7L3.500 4z" fill="#555" stroke="none" />
                  </Icon>
                )}
              </button>
            </HeadInner>
          </HeadCell>
        ))}
        <Blanks from={4} />
      </Row>
      {RECORDS.map(([n, date, seat, shop, count], i) => {
        const look = { $band: i % 2 === 0, $tall: i < 2 };
        return (
          <Row key={n} $h={i < 2 ? 30 : 25}>
            <RowHead $kind="filtered" $before={i !== 1} $after={i > 0}>
              {n}
            </RowHead>
            <Cell {...look} $align="right">{date}</Cell>
            <Cell {...look} $align="center">{seat}</Cell>
            <Cell {...look} $align="left">{shop}</Cell>
            <Cell {...look} $align="right" $last>{count}</Cell>
            <Blanks from={4} />
          </Row>
        );
      })}
      {PLAIN_ROWS.map((n) => (
        <Row key={n} $h={25}>
          <RowHead $kind="plain" $before={n === 52}>
            {n}
          </RowHead>
          <Blanks from={0} />
        </Row>
      ))}
    </tbody>
  </Grid>
);

const RibbonBar = () => (
  <Ribbon>
    <Group w={210} name="クリップボード" pad={14} launcher>
      <Big w={44} icon={<PasteIcon />} lines={["貼り付け", ""]} arrow />
      <Gap $w={5} />
      <Stack>
        <Small><IconPad><CutIcon /></IconPad>切り取り</Small>
        <Small><IconPad><CopyIcon /></IconPad>コピー<Chevron /></Small>
        <Small><IconPad><BrushIcon /></IconPad>書式のコピー/貼り付け</Small>
      </Stack>
    </Group>
    <Group w={280} name="フォント" pad={8} launcher>
      <TwoRows>
        <ToolRow $gap={2}>
          <Select w={170} label="フォント名" value="游ゴシック" />
          <Select w={40} label="サイズ" value="11" />
          <Tool aria-label="フォント サイズの拡大"><GrowFontIcon /></Tool>
          <Tool $w={28} aria-label="フォント サイズの縮小"><GrowFontIcon down /></Tool>
        </ToolRow>
        <ToolRow>
          <Tool $on><b>B</b></Tool>
          <Tool $w={28}><Italic>I</Italic></Tool>
          <Tool $w={40}><u>U</u><Chevron /></Tool>
          <Rule />
          <Tool $w={43} aria-label="罫線"><BordersIcon /><Chevron /></Tool>
          <Rule />
          <Tool $w={42} aria-label="塗りつぶしの色"><FillIcon /><Chevron /></Tool>
          <Tool $w={42} aria-label="フォントの色"><FontColorIcon /><Chevron /></Tool>
          <Rule />
          <Tool $w={43} aria-label="ふりがな"><RubyIcon /><Chevron /></Tool>
        </ToolRow>
      </TwoRows>
    </Group>
    <Group w={325} name="配置" pad={8} launcher>
      <TwoRows>
        <ToolRow $gap={2}>
          <Tool aria-label="上揃え"><AlignIcon rows={[[1, 0, 14], [3, 4, 10], [1, 8, 14]]} /></Tool>
          <Tool $on aria-label="上下中央揃え"><AlignIcon rows={[[1, 3, 14], [3, 7, 10], [1, 11, 14]]} /></Tool>
          <Tool aria-label="下揃え"><AlignIcon rows={[[1, 6, 14], [3, 10, 10], [1, 14, 14]]} /></Tool>
          <Rule />
          <Tool $w={38} aria-label="方向"><OrientIcon /><Chevron /></Tool>
        </ToolRow>
        <ToolRow $gap={2}>
          <Tool aria-label="左揃え"><AlignIcon rows={[[1, 1, 14], [1, 5, 10], [1, 9, 14], [1, 13, 10]]} /></Tool>
          <Tool $on aria-label="中央揃え"><AlignIcon rows={[[1, 1, 14], [3, 5, 10], [1, 9, 14], [3, 13, 10]]} /></Tool>
          <Tool aria-label="右揃え"><AlignIcon rows={[[1, 1, 14], [5, 5, 10], [1, 9, 14], [5, 13, 10]]} /></Tool>
          <Rule />
          <Tool aria-label="インデントを減らす"><IndentIcon /></Tool>
          <Tool aria-label="インデントを増やす"><IndentIcon right /></Tool>
        </ToolRow>
      </TwoRows>
      <RuleSlot><Rule as="div" $h={62} /></RuleSlot>
      <TwoRows>
        <WideTool><WrapIcon />折り返して全体を表示する</WideTool>
        <WideTool $dim><MergeIcon /><Spread>セルを結合して中央揃え</Spread><Chevron /></WideTool>
      </TwoRows>
      <Gap $w={14} />
    </Group>
    <Group w={162} name="数値" pad={8} launcher>
      <TwoRows>
        <Select w={146} label="表示形式" value="標準" />
        <ToolRow>
          <Tool $w={38} aria-label="通貨"><MoneyIcon /><Chevron /></Tool>
          <Tool $w={28} aria-label="パーセント"><PercentIcon /></Tool>
          <Tool $w={26} aria-label="桁区切り"><CommaIcon /></Tool>
          <Rule />
          <Tool $w={28} aria-label="小数点以下を増やす"><DecimalIcon /></Tool>
          <Tool $w={25} aria-label="小数点以下を減らす"><DecimalIcon less /></Tool>
        </ToolRow>
      </TwoRows>
    </Group>
    <Group w={373} name="スタイル" pad={4}>
      <Big w={56} icon={<CondIcon />} lines={["条件付き", "書式"]} arrow />
      <Big w={68} icon={<TableFormatIcon />} lines={["テーブルとして", "書式設定"]} arrow />
      <Gap $w={4} />
      <Gallery>
        <GalleryGrid>
          <Swatch $on $bg="#fff" $fg="#000">標準</Swatch>
          <Swatch $bg="#ffeb9c" $fg="#9c5700">どちらでも...</Swatch>
          <Swatch $bg="#ffc7ce" $fg="#9c0006">悪い</Swatch>
          <Swatch $bg="#c6efce" $fg="#006100">良い</Swatch>
        </GalleryGrid>
        <GalleryScroll>
          <button aria-label="前へ"><Icon w={6} h={4} stroke="#aaa"><path d="M.5 3.500L3 1l2.500 2.500" /></Icon></button>
          <button aria-label="次へ"><Chevron /></button>
          <button aria-label="その他"><CustomizeIcon /></button>
        </GalleryScroll>
      </Gallery>
    </Group>
    <Group w={146} name="セル" pad={7}>
      <Big w={44} icon={<CellIcon kind="insert" />} lines={["挿入", ""]} arrow />
      <Big w={44} icon={<CellIcon kind="delete" />} lines={["削除", ""]} arrow />
      <Big w={44} icon={<CellIcon kind="format" />} lines={["書式", ""]} arrow />
    </Group>
    <Group w={229} name="編集" pad={12}>
      <Stack>
        <Small $w={97}><SumIcon /><Spread>オート SUM</Spread><Chevron /></Small>
        <Small><FillDownIcon />フィル<Chevron /></Small>
        <Small><EraserIcon />クリア<Chevron /></Small>
      </Stack>
      <Gap $w={8} />
      <Big w={60} icon={<SortIcon />} lines={["並べ替えと", "フィルター"]} arrow />
      <Big w={48} icon={<FindIcon />} lines={["検索と", "選択"]} arrow />
    </Group>
    <Group w={58} name="分析" pad={6}>
      <Big w={46} icon={<AnalyzeIcon />} lines={["データ", "分析"]} />
    </Group>
    <Group w={68} name="Excel Labs" pad={10}>
      <Big w={48} icon={<FlaskIcon />} lines={["Excel", "Labs"]} />
    </Group>
    <Collapse aria-label="リボンを折りたたむ"><Chevron size={10} /></Collapse>
  </Ribbon>
);

export default function App() {
  return (
    <Window>
      <Global />
      <TitleBar>
        <TitleLeft>
          <ExcelLogo />
          <AutoSave>
            自動保存
            <Toggle role="switch" aria-checked="false">オフ</Toggle>
          </AutoSave>
          <button aria-label="上書き保存"><SaveIcon /></button>
          <Split aria-label="元に戻す"><UndoIcon /><Chevron /></Split>
          <Split aria-label="やり直し" $dim><UndoIcon flip /><Chevron /></Split>
          <button aria-label="クイック アクセスのカスタマイズ"><CustomizeIcon /></button>
          <FileName>スライサー.xlsx<Chevron size={9} /></FileName>
        </TitleLeft>
        <SearchBox>
          <SearchIcon />
          <input placeholder="検索" aria-label="検索" />
        </SearchBox>
        <TitleRight>
          <Account>森太郎 窓之<AvatarIcon /></Account>
          <TitleTools>
            <button aria-label="プレミアム"><GemIcon /></button>
            <button aria-label="ペン"><PenIcon /></button>
          </TitleTools>
          <WindowTools>
            <button aria-label="最小化"><MinBar /></button>
            <button aria-label="最大化"><MaxBox /></button>
            <button aria-label="閉じる"><CloseIcon /></button>
          </WindowTools>
        </TitleRight>
      </TitleBar>
      <TabBar>
        {TABS.map((t, i) => (
          <Tab key={t} $kana={hasKana(t)} $active={i === 1} $accent={i === 12}>{t}</Tab>
        ))}
        <TabActions>
          <CommentButton><CommentIcon />コメント</CommentButton>
          <ShareButton><ShareIcon />共有<Chevron /></ShareButton>
          <button aria-label="フィードバック"><FeedbackIcon /></button>
        </TabActions>
      </TabBar>
      <RibbonBar />
      <FormulaBar>
        <Field $w={222}>
          <input aria-label="名前ボックス" defaultValue="A1" />
          <Chevron size={10} />
        </Field>
        <Dots $w={20}><i /><i /><i /></Dots>
        <FxBox>
          <button aria-label="キャンセル"><CancelIcon /></button>
          <button aria-label="入力"><CheckIcon /></button>
          <Fx>fx</Fx>
        </FxBox>
        <Field>
          <Gap $w={5} />
          <input aria-label="数式バー" defaultValue="日付" />
          <Chevron size={10} />
        </Field>
      </FormulaBar>
      <Main>
        <Sheet>
          <SheetGrid />
          <Selection />
          <ResizeMark />
          {SLICERS.map((s) => (
            <Slicer key={s.title} {...s} />
          ))}
          <RedFrame />
          <Bracket width="28" height="318" viewBox="0 0 28 318" fill="none" aria-hidden="true">
            <defs>
              <linearGradient id="blush" x1="0" x2="1" y1="0" y2="0">
                <stop offset="0" stopColor="#fff8f6" />
                <stop offset="1" stopColor="#ffe9e6" />
              </linearGradient>
            </defs>
            <path d="M1 5h16v306H1z" fill="url(#blush)" fillOpacity=".7" />
            <path d="M0 3.500h15q4.500 0 4.500 5V154q0 3 4.500 4.500-4.500 1.500-4.500 4.500V308q0 5-4.500 5H0" stroke="#f00" strokeWidth="5" strokeLinejoin="round" />
          </Bracket>
        </Sheet>
        <VScroll>
          <VTrack>
            <Triangle dir="up" />
            <VThumb />
            <Space $f={62} />
            <Triangle dir="down" />
          </VTrack>
        </VScroll>
      </Main>
      <SheetBar>
        <SheetNav>
          <Icon w={6} h={9}><path d="M5.500.5l-5 4 5 4" /></Icon>
          <Icon w={6} h={9}><path d="M.5.5l5 4-5 4" /></Icon>
        </SheetNav>
        <SheetTab $on><span>Sheet1</span></SheetTab>
        <RuleBar><Rule $h={18} $m={2} /></RuleBar>
        <SheetTab><span>Sheet3</span></SheetTab>
        <RuleBar><Rule $h={18} /></RuleBar>
        <AddSheet aria-label="新しいシート"><Icon w={11} h={11} stroke="#333"><path d="M5.500 0v11M0 5.500h11" /></Icon></AddSheet>
        <Space $f={1} />
        <Dots $w={16}><i /><i /><i /></Dots>
        <HScroll>
          <Triangle dir="left" />
          <HThumb />
          <Space $f={25} />
          <Triangle dir="right" />
        </HScroll>
      </SheetBar>
      <StatusBar>
        <StatusText>準備完了</StatusText>
        <StatusText $kana>50 レコード中 12 個が見つかりました</StatusText>
        <button aria-label="マクロの記録"><MacroIcon /></button>
        <Views>
          <ViewButton $on aria-label="標準"><ViewIcon kind="grid" /></ViewButton>
          <ViewButton aria-label="ページ レイアウト"><ViewIcon kind="page" /></ViewButton>
          <ViewButton aria-label="改ページ プレビュー"><ViewIcon kind="break" /></ViewButton>
        </Views>
        <Zoom>
          <button aria-label="縮小"><Icon w={8} h={8}><path d="M0 4h8" /></Icon></button>
          <input type="range" min={0} max={100} defaultValue={50} aria-label="ズーム" />
          <button aria-label="拡大"><Icon w={8} h={8}><path d="M0 4h8M4 0v8" /></Icon></button>
        </Zoom>
        <StatusText>100%</StatusText>
      </StatusBar>
    </Window>
  );
}
